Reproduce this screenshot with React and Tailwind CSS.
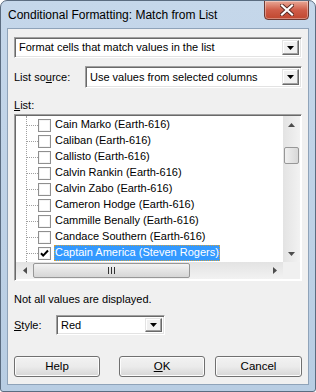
import React from "react";

const font = { fontFamily: '"Liberation Sans", Arial, sans-serif' };

function DropBtn() {
  return (
    <div className="w-[17px] h-full bg-[#f0f0f0] border border-t-[#e3e3e3] border-l-[#e3e3e3] border-b-[#696969] border-r-[#696969] shadow-[inset_-1px_-1px_0_#a0a0a0,inset_1px_1px_0_#ffffff] flex items-center justify-center">
      <svg width="7" height="4" viewBox="0 0 7 4"><path d="M0 0h7L3.5 4z" fill="#000" /></svg>
    </div>
  );
}

function Combo({ text, className }) {
  return (
    <div className={"flex items-stretch bg-white border border-t-[#a0a0a0] border-l-[#a0a0a0] border-b-white border-r-white shadow-[inset_1px_1px_0_#696969,inset_-1px_-1px_0_#e3e3e3] p-[2px] " + className}>
      <div className="flex-1 pl-[2px] text-[11px] leading-[15px] text-black flex items-center">{text}</div>
      <DropBtn />
    </div>
  );
}

function Check({ checked }) {
  return (
    <div className="w-[13px] h-[13px] border border-[#8f8f8f] bg-white shadow-[inset_0_0_0_1px_#f4f4f4] flex items-center justify-center shrink-0">
      {checked && (
        <svg width="9" height="9" viewBox="0 0 9 9"><path d="M1 4.2l2.2 2.4L8 1.5" stroke="#000" strokeWidth="2" fill="none" /></svg>
      )}
    </div>
  );
}

const items = [
  "Cain Marko (Earth-616)",
  "Caliban (Earth-616)",
  "Callisto (Earth-616)",
  "Calvin Rankin (Earth-616)",
  "Calvin Zabo (Earth-616)",
  "Cameron Hodge (Earth-616)",
  "Cammille Benally (Earth-616)",
  "Candace Southern (Earth-616)",
  "Captain America (Steven Rogers)",
];

function Arrow({ dir }) {
  const d = {
    up: "M0 4L3.5 0L7 4z",
    down: "M0 0h7L3.5 4z",
    left: "M4 0v7L0 3.5z",
    right: "M0 0v7L4 3.5z",
  }[dir];
  const vert = dir === "up" || dir === "down";
  return (
    <svg width={vert ? 7 : 4} height={vert ? 4 : 7} viewBox={vert ? "0 0 7 4" : "0 0 4 7"}>
      <path d={d} fill="#4d4d4d" />
    </svg>
  );
}

function Button({ children, className = "" }) {
  return (
    <div className={"w-[86px] h-[21px] border border-[#707070] rounded-[3px] bg-gradient-to-b from-[#f2f2f2] via-[#ebebeb] to-[#d6d6d6] shadow-[inset_0_0_0_1px_#fcfcfc] flex items-center justify-center text-[11.5px] text-black " + className}>
      {children}
    </div>
  );
}

export default function App() {
  return (
    <div style={font} className="w-[316px] h-[392px] rounded-t-[7px] rounded-b-[3px] border border-[#5b6c80] bg-gradient-to-b from-[#c5d7ea] to-[#b8cde3] flex flex-col overflow-hidden">
      <div className="h-[27px] flex items-start relative shrink-0">
        <div className="pl-[7px] pt-[5px] text-[12px] leading-[18px] text-black">Conditional Formatting: Match from List</div>
        <div className="absolute right-[6px] top-[-1px] w-[45px] h-[20px] rounded-b-[4px] border border-[#6d3a33] bg-gradient-to-b from-[#e8a897] via-[#cf5c48] to-[#c0472f] shadow-[inset_0_0_0_1px_rgba(255,255,255,0.35)] flex items-center justify-center">
          <svg width="14" height="12" viewBox="0 0 14 12">
            <path d="M2 1.5L12 10.5M12 1.5L2 10.5" stroke="#5a2b24" strokeWidth="4" strokeLinecap="square" />
            <path d="M2 1.5L12 10.5M12 1.5L2 10.5" stroke="#ffffff" strokeWidth="2.2" strokeLinecap="square" />
          </svg>
        </div>
      </div>
      <div className="mx-[6px] mb-[6px] flex-1 border border-[#8fa3b9] bg-[#f0f0f0] flex flex-col px-[6px] text-[11px] text-black">
        <Combo text="Format cells that match values in the list" className="mt-[8px] h-[21px]" />
        <div className="mt-[8px] flex items-center h-[22px]">
          <div className="w-[71px]">List so<span className="underline">u</span>rce:</div>
          <Combo text="Use values from selected columns" className="flex-1 h-[22px]" />
        </div>
        <div className="mt-[9px] h-[16px] leading-[16px]"><span className="underline">L</span>ist:</div>
        <div className="mt-[1px] h-[167px] border border-t-[#a0a0a0] border-l-[#a0a0a0] border-b-white border-r-white shadow-[inset_1px_1px_0_#696969] bg-white flex flex-col p-[1px]">
          <div className="flex flex-1 min-h-0">
            <div className="flex-1 relative pt-[1px]">
              <div className="absolute left-[10px] top-0 bottom-0 border-l border-dotted border-[#a0a0a0]" />
              {items.map((t, i) => {
                const sel = i === items.length - 1;
                return (
                  <div key={t} className="h-[16px] flex items-center">
                    <div className="w-[11px] ml-[11px] border-t border-dotted border-[#a0a0a0]" />
                    <Check checked={sel} />
                    <div className={"ml-[3px] px-[1px] h-[16px] leading-[15px] whitespace-nowrap " + (sel ? "bg-[#3399ff] text-white outline outline-1 outline-dotted outline-[#d0a040] -outline-offset-1" : "")}>{t}</div>
                  </div>
                );
              })}
            </div>
            <div className="w-[17px] bg-gradient-to-r from-[#e3e3e3] to-[#f2f2f2] flex flex-col items-center">
              <div className="h-[17px] flex items-center justify-center"><Arrow dir="up" /></div>
              <div className="mt-[14px] w-[15px] h-[17px] rounded-[2px] border border-[#979797] bg-gradient-to-r from-[#f0f0f0] to-[#d8d8d8]" />
              <div className="flex-1" />
              <div className="h-[17px] flex items-center justify-center"><Arrow dir="down" /></div>
            </div>
          </div>
          <div className="h-[17px] flex shrink-0">
            <div className="flex-1 bg-gradient-to-b from-[#e3e3e3] to-[#f2f2f2] flex items-center">
              <div className="w-[17px] flex items-center justify-center"><Arrow dir="left" /></div>
              <div className="w-[157px] h-[15px] rounded-[2px] border border-[#979797] bg-gradient-to-b from-[#f2f2f2] to-[#d6d6d6] flex items-center justify-center">
                <svg width="7" height="7" viewBox="0 0 7 7"><path d="M0.5 0v7M3.5 0v7M6.5 0v7" stroke="#333" strokeWidth="1" /></svg>
              </div>
              <div className="flex-1" />
              <div className="w-[17px] flex items-center justify-center"><Arrow dir="right" /></div>
            </div>
            <div className="w-[17px] bg-[#f0f0f0]" />
          </div>
        </div>
        <div className="mt-[10px] h-[16px] leading-[16px]">Not all values are displayed.</div>
        <div className="mt-[8px] flex items-center h-[20px]">
          <div className="w-[42px]"><span className="underline">S</span>tyle:</div>
          <Combo text="Red" className="w-[109px] h-[20px]" />
        </div>
        <div className="mt-[21px] flex">
          <Button>Help</Button>
          <Button className="ml-[19px]"><span className="underline">O</span>K</Button>
          <Button className="ml-[10px] w-[87px]">Cancel</Button>
        </div>
      </div>
    </div>
  );
}
